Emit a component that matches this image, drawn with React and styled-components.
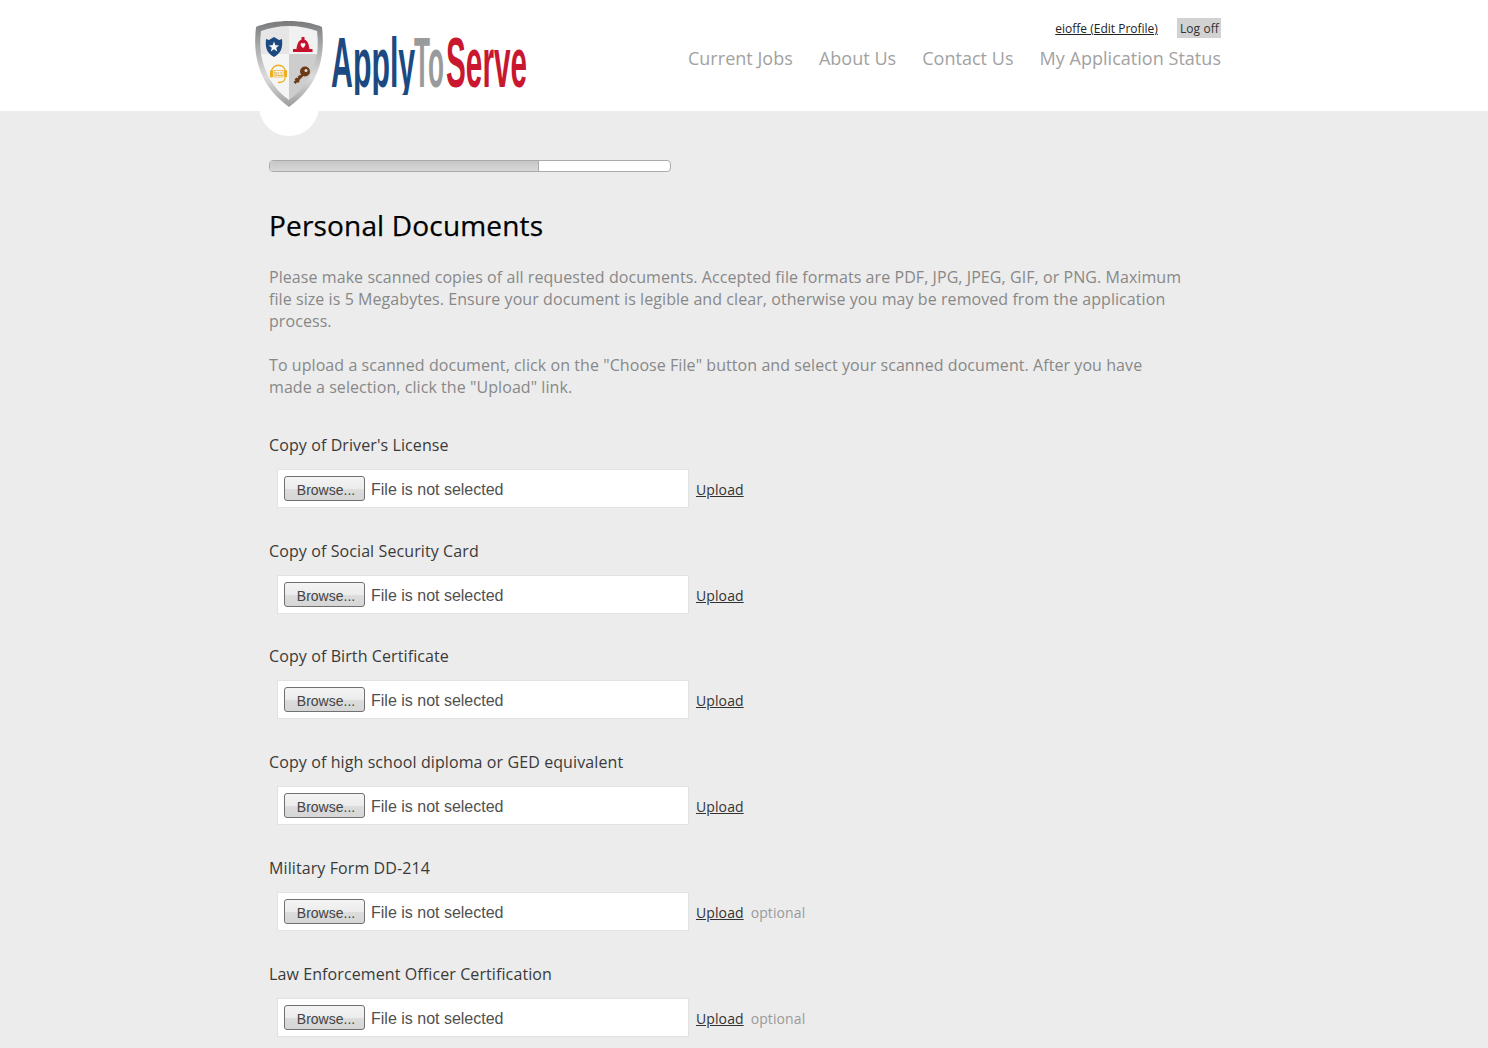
import React from "react";
import styled, { createGlobalStyle } from "styled-components";

const documents = [
  { label: "Copy of Driver's License" },
  { label: "Copy of Social Security Card" },
  { label: "Copy of Birth Certificate" },
  { label: "Copy of high school diploma or GED equivalent" },
  { label: "Military Form DD-214", optional: true },
  { label: "Law Enforcement Officer Certification", optional: true },
];

function Logo() {
  return (
    <LogoSvg viewBox="0 0 280 96" width="280" height="96">
      <defs>
        <linearGradient id="rim" x1="0" y1="0" x2="0" y2="1">
          <stop offset="0" stopColor="#77797b" />
          <stop offset="0.3" stopColor="#a9aaab" />
          <stop offset="0.65" stopColor="#dcdcdc" />
          <stop offset="1" stopColor="#9c9c9c" />
        </linearGradient>
        <clipPath id="wordClip">
          <rect x="0" y="-70" width="700" height="78" />
        </clipPath>
      </defs>
      <path d="M34 3 C46 3 58 5 67 9 C70 36 66 66 34 89 C2 66 -2 36 1 9 C10 5 22 3 34 3 Z" fill="url(#rim)" />
      <path d="M34 8 C24 8 14 10 6 13 C5 21 5 29 6 36 H34 Z" fill="#e6e6e6" />
      <path d="M34 8 C44 8 54 10 62 13 C63 21 63 29 62 36 H34 Z" fill="#f1f1f1" />
      <path d="M6 36 H34 V82 C18 71 9 54 6 36 Z" fill="#f5f5f5" />
      <path d="M62 36 H34 V82 C50 71 59 54 62 36 Z" fill="#cdcdcd" />
      <path d="M19 19 L24 22 L27 21 C28 30 26 35 19 39 C12 35 10 30 11 21 L14 22 Z" fill="#1c4a80" />
      <path d="M19 23.5 L20.4 27.2 L24.2 27.4 L21.2 29.8 L22.2 33.4 L19 31.3 L15.8 33.4 L16.8 29.8 L13.8 27.4 L17.6 27.2 Z" fill="#fff" />
      <path d="M46.5 19 H49.5 V21.5 C53 23 54 27 54.5 31 H57.5 V34 H38 V31 H41.5 C42 27 43 23 46.5 21.5 Z" fill="#c6132d" />
      <path d="M48 30 C45.4 27.6 45 26 46.4 25.2 C47.4 24.8 47.9 25.4 48 26 C48.2 25.4 48.7 24.8 49.7 25.2 C51 26 50.6 27.6 48 30 Z" fill="#fff" />
      <g fill="none" stroke="#efae1f" strokeWidth="1.3">
        <path d="M16.5 54 C16.5 45 30.5 45 30.5 54" />
        <path d="M30 60 C30 63.5 26.5 64.5 23 64.5" />
      </g>
      <rect x="15" y="52" width="3" height="7.5" rx="1.2" fill="#efae1f" />
      <rect x="29" y="52" width="3" height="7.5" rx="1.2" fill="#efae1f" />
      <rect x="19" y="52.5" width="9" height="6.5" fill="none" stroke="#efae1f" strokeWidth="0.7" />
      <IconCaption x="23.5" y="57.6" fontSize="5">911</IconCaption>
      <path d="M39.5 65 L49.5 55 M40.5 60.5 L44 64 M43.5 58 L46 60.5" stroke="#6d3a17" strokeWidth="2.6" fill="none" />
      <circle cx="50" cy="53.5" r="5" fill="#6d3a17" />
      <circle cx="51" cy="52.5" r="1.5" fill="#e0e0e0" />
      <g transform="translate(76 69) scale(0.433 1)">
        <Word fontSize="70" fill="#1b4a82" clipPath="url(#wordClip)">Apply</Word>
      </g>
      <g transform="translate(159 69) scale(0.374 1)">
        <Word fontSize="70" fill="#999a9c">To</Word>
      </g>
      <g transform="translate(191 69) scale(0.425 1)">
        <Word fontSize="70" fill="#c8172f">Serve</Word>
      </g>
    </LogoSvg>
  );
}

function DocumentRow({ label, optional }) {
  return (
    <Row>
      <RowLabel>{label}</RowLabel>
      <RowControls>
        <FileBox>
          <BrowseButton type="button">Browse...</BrowseButton>
          <FileName>File is not selected</FileName>
        </FileBox>
        <UploadLink href="#">Upload</UploadLink>
        {optional && <OptionalNote>optional</OptionalNote>}
      </RowControls>
    </Row>
  );
}

export default function App() {
  return (
    <>
      <GlobalStyle />
      <Header>
        <HeaderInner>
          <LogoSlot>
            <Logo />
            <LogoTab />
          </LogoSlot>
          <HeaderRight>
            <UserBar>
              <ProfileLink href="#">eioffe (Edit Profile)</ProfileLink>
              <LogOff href="#">Log off</LogOff>
            </UserBar>
            <Nav>
              <NavLink href="#">Current Jobs</NavLink>
              <NavLink href="#">About Us</NavLink>
              <NavLink href="#">Contact Us</NavLink>
              <NavLink href="#">My Application Status</NavLink>
            </Nav>
          </HeaderRight>
        </HeaderInner>
      </Header>
      <Main>
        <Progress>
          <ProgressFill />
        </Progress>
        <Title>Personal Documents</Title>
        <Intro>
          Please make scanned copies of all requested documents. Accepted file formats are PDF, JPG, JPEG, GIF, or PNG. Maximum
          file size is 5 Megabytes. Ensure your document is legible and clear, otherwise you may be removed from the application
          process.
        </Intro>
        <Intro>
          To upload a scanned document, click on the "Choose File" button and select your scanned document. After you have
          made a selection, click the "Upload" link.
        </Intro>
        <Rows>
          {documents.map((doc) => (
            <DocumentRow key={doc.label} label={doc.label} optional={doc.optional} />
          ))}
        </Rows>
      </Main>
    </>
  );
}

const GlobalStyle = createGlobalStyle`
  html, body {
    margin: 0;
    padding: 0;
    height: 100%;
    overflow: hidden;
    background: #ececec;
    font-family: "Open Sans", sans-serif;
  }
`;

const Header = styled.header`
  position: relative;
  height: 111px;
  background: #fff;
`;

const HeaderInner = styled.div`
  width: 952px;
  margin: 0 auto;
  transform: translateX(1px);
  display: flex;
  justify-content: space-between;
`;

const LogoSlot = styled.div`
  position: relative;
  margin-left: -14px;
  padding-top: 18px;
`;

const LogoSvg = styled.svg`
  position: relative;
  z-index: 1;
  display: block;
`;

const Word = styled.text`
  font-family: "Liberation Sans", sans-serif;
  font-weight: 700;
`;

const IconCaption = styled.text`
  font-family: "Liberation Sans", sans-serif;
  fill: #c9961c;
  text-anchor: middle;
`;

const LogoTab = styled.div`
  position: absolute;
  left: 4px;
  top: 76px;
  width: 60px;
  height: 60px;
  border-radius: 50%;
  background: #fff;
`;

const HeaderRight = styled.div`
  display: flex;
  flex-direction: column;
  align-items: flex-end;
  padding-top: 18px;
`;

const UserBar = styled.div`
  display: flex;
  align-items: center;
  gap: 19px;
  height: 20px;
  font-size: 12px;
`;

const ProfileLink = styled.a`
  color: #222;
  text-decoration: underline;
`;

const LogOff = styled.a`
  display: block;
  padding: 1px 2px 0 3px;
  line-height: 19px;
  letter-spacing: 0.1px;
  background: #d2d2d2;
  color: #333;
  text-decoration: none;
`;

const Nav = styled.nav`
  display: flex;
  gap: 26px;
  margin-top: 8px;
`;

const NavLink = styled.a`
  font-size: 18px;
  line-height: 24px;
  letter-spacing: 0.03px;
  color: #a2a2a2;
  text-decoration: none;
`;

const Main = styled.main`
  width: 952px;
  margin: 0 auto;
  transform: translateX(1px);
  padding-top: 49px;
`;

const Progress = styled.div`
  box-sizing: border-box;
  width: 402px;
  height: 12px;
  background: #fff;
  border: 1px solid #aaa;
  border-radius: 4px;
  overflow: hidden;
`;

const ProgressFill = styled.div`
  width: 268px;
  height: 100%;
  background: linear-gradient(#c6c6c6, #d8d8d8);
  border-right: 1px solid #aaa;
`;

const Title = styled.h1`
  margin: 33px 0 0;
  font-size: 28px;
  line-height: 40px;
  font-weight: 400;
  letter-spacing: 0.17px;
  -webkit-text-stroke: 0.25px #000;
  color: #000;
`;

const Intro = styled.p`
  margin: 21px 0 0;
  width: 915px;
  font-size: 16px;
  line-height: 22px;
  letter-spacing: 0.07px;
  color: #888;

  & + & {
    margin-top: 22px;
  }
`;

const Rows = styled.div`
  margin-top: 35.8px;
`;

const Row = styled.section`
  height: 105.8px;
`;

const RowLabel = styled.div`
  font-size: 16px;
  line-height: 22px;
  letter-spacing: 0.1px;
  color: #3a3a3a;
`;

const RowControls = styled.div`
  display: flex;
  align-items: center;
  margin-top: 13px;
  padding-left: 8px;
`;

const FileBox = styled.div`
  box-sizing: border-box;
  display: flex;
  align-items: center;
  gap: 6px;
  width: 412px;
  height: 39px;
  padding-left: 6px;
  background: #fff;
  border: 1px solid #e2e2e2;
`;

const BrowseButton = styled.button`
  box-sizing: border-box;
  width: 81px;
  height: 25px;
  padding: 3px 0 0 3px;
  font-family: "Liberation Sans", sans-serif;
  font-size: 14px;
  color: #444;
  background: linear-gradient(#f4f4f4 0%, #ececec 50%, #dcdcdc 55%, #d6d6d6 100%);
  border: 1px solid #707070;
  border-radius: 3px;
`;

const FileName = styled.span`
  padding-top: 3px;
  font-family: "Liberation Sans", sans-serif;
  font-size: 16px;
  color: #505050;
`;

const UploadLink = styled.a`
  margin-left: 7px;
  padding-top: 2px;
  font-size: 14px;
  letter-spacing: 0.1px;
  color: #333;
  text-decoration: underline;
`;

const OptionalNote = styled.span`
  margin-left: 7px;
  padding-top: 2px;
  font-size: 14px;
  letter-spacing: 0.1px;
  color: #9a9a9a;
`;
